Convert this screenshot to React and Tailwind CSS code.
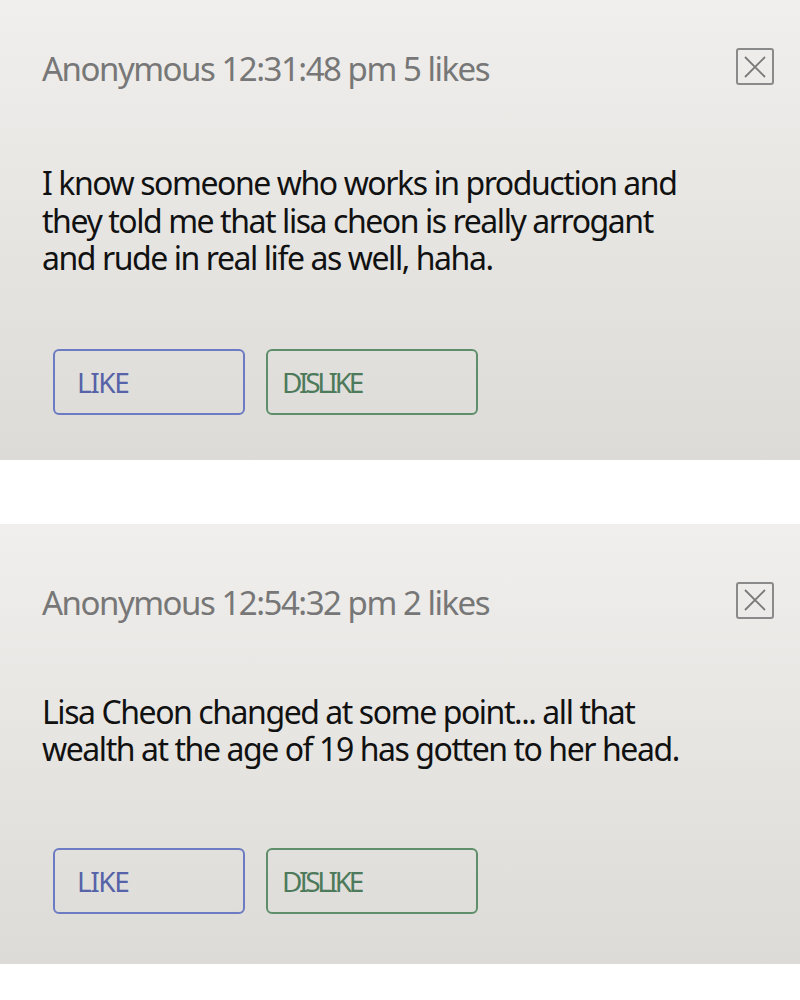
import React from 'react'

const posts = [
  {
    time: '12:31:48 pm',
    likes: 5,
    text: ['I know someone who works in production and', 'they told me that lisa cheon is really arrogant', 'and rude in real life as well, haha.'],
    first: true,
  },
  {
    time: '12:54:32 pm',
    likes: 2,
    text: ['Lisa Cheon changed at some point... all that', 'wealth at the age of 19 has gotten to her head.'],
  },
]

const CloseBox = () => (
  <button className="w-[38px] h-[37px] border-2 border-[#8a8a8a] rounded-[3px] flex items-center justify-center">
    <svg width="26" height="26" viewBox="0 0 26 26">
      <path d="M3 3 L23 23 M23 3 L3 23" stroke="#7a7a7a" strokeWidth="1.8" fill="none" />
    </svg>
  </button>
)

const Post = ({ post }) => (
  <div
    className={`bg-gradient-to-b from-[#f0efed] to-[#dcdbd7] pl-[42px] pr-[26px] ${post.first ? 'pt-[48px] pb-[45px]' : 'pt-[58px] pb-[50px]'}`}
  >
    <div className="flex justify-between items-start">
      <div className="text-[#777777] text-[33px] leading-[40px] tracking-[-0.045em] mt-[1px]">
        Anonymous {post.time} {post.likes} likes
      </div>
      <CloseBox />
    </div>
    <div className={`text-[#111111] text-[32px] leading-[37.5px] tracking-[-0.045em] ${post.first ? 'mt-[75px]' : 'mt-[70px]'}`}>
      {post.text.map((line, i) => (
        <div key={i}>{line}</div>
      ))}
    </div>
    <div className={`flex gap-[21px] pl-[11px] ${post.first ? 'mt-[72px]' : 'mt-[80px]'}`}>
      <button className="w-[192px] h-[66px] border-2 border-[#6c7bc2] rounded-[6px] text-left pl-[22px] text-[#5663a8] text-[28px] tracking-[-0.05em]">
        LIKE
      </button>
      <button className="w-[212px] h-[66px] border-2 border-[#5e8f6a] rounded-[6px] text-left pl-[14px] text-[#4d7a5a] text-[28px] tracking-[-0.12em]">
        DISLIKE
      </button>
    </div>
  </div>
)

export default function App() {
  return (
    <div className="w-[800px] min-h-[1000px] bg-white font-['Noto_Sans',sans-serif] flex flex-col gap-[64px]">
      {posts.map((p, i) => (
        <Post key={i} post={p} />
      ))}
    </div>
  )
}
